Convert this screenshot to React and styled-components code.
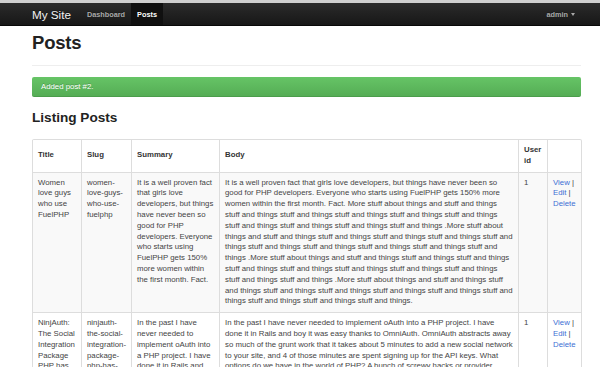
import styled, { createGlobalStyle } from "styled-components";

const GlobalStyle = createGlobalStyle`
  html, body {
    margin: 0;
    padding: 0;
    overflow: hidden;
    background: #fff;
  }
  body {
    font-family: "Liberation Sans", Arial, sans-serif;
    color: #333;
  }
`;

const colors = {
  border: "#dddddd",
  stripe: "#f9f9f9",
  link: "#3d6fd4",
  text: "#444",
};

const TopStrip = styled.div`
  height: 3px;
  background: #cfcfcf;
`;

const NavigationBar = styled.nav`
  height: 22px;
  background: linear-gradient(#2b2b2b, #171717);
  border-bottom: 1px solid #080808;
`;

const NavInner = styled.div`
  width: 549px;
  margin-left: 32px;
  height: 100%;
  display: flex;
  align-items: stretch;
`;

const Brand = styled.a`
  display: flex;
  align-items: center;
  font-size: 11.7px;
  color: #f2f2f2;
  text-decoration: none;
  padding-right: 10px;
  text-shadow: 0 -1px 0 rgba(0, 0, 0, 0.4);
`;

const NavLink = styled.a`
  display: flex;
  align-items: center;
  padding: 0 6px;
  font-size: 7.3px;
  font-weight: bold;
  text-decoration: none;
  color: ${(p) => (p.$active ? "#ffffff" : "#a8a8a8")};
  background: ${(p) => (p.$active ? "#101010" : "transparent")};
  text-shadow: 0 -1px 0 rgba(0, 0, 0, 0.3);
`;

const Spacer = styled.div`
  flex: 1;
`;

const Caret = styled.span`
  display: inline-block;
  margin-left: 3px;
  border-left: 2.5px solid transparent;
  border-right: 2.5px solid transparent;
  border-top: 3px solid #a8a8a8;
`;

const Container = styled.div`
  width: 549px;
  margin-left: 32px;
`;

const PageTitle = styled.h1`
  margin: 6px 0 0;
  font-size: 18.5px;
  line-height: 22px;
  font-weight: bold;
  color: #222;
  letter-spacing: -0.2px;
`;

const Divider = styled.hr`
  margin: 11px 0 11px;
  border: 0;
  border-top: 1px solid #eeeeee;
`;

const Alert = styled.div`
  height: 19px;
  display: flex;
  align-items: center;
  padding: 0 9px;
  background: linear-gradient(#66c466, #55ad55);
  border-bottom: 1px solid #4b9d4b;
  border-radius: 2px;
  font-size: 7.8px;
  color: #fff;
  text-shadow: 0 -1px 0 rgba(0, 0, 0, 0.2);
`;

const SectionTitle = styled.h2`
  margin: 13px 0 13px;
  font-size: 13.6px;
  line-height: 16px;
  font-weight: bold;
  color: #222;
`;

const Table = styled.table`
  width: 549px;
  table-layout: fixed;
  border-collapse: separate;
  border-spacing: 0;
  border: 1px solid ${colors.border};
  border-left: 0;
  border-radius: 2px;
  font-size: 7.8px;
  line-height: 10.8px;
  color: ${colors.text};
`;

const HeadCell = styled.th`
  text-align: left;
  vertical-align: middle;
  padding: 5px 5px;
  font-weight: bold;
  color: #333;
  border-left: 1px solid ${colors.border};
`;

const Row = styled.tr`
  background: ${(p) => (p.$striped ? colors.stripe : "#fff")};
`;

const Cell = styled.td`
  vertical-align: top;
  padding: 5px 5px;
  border-left: 1px solid ${colors.border};
  border-top: 1px solid ${colors.border};
  overflow-wrap: break-word;
`;

const Action = styled.a`
  color: ${colors.link};
  text-decoration: none;
`;

const Sep = styled.span`
  color: ${colors.text};
`;

const more = (n) =>
  "More stuff about things and stuff and things" + " stuff and things".repeat(n);

const posts = [
  {
    title: "Women love guys who use FuelPHP",
    slug: "women-love-guys-who-use-fuelphp",
    summary:
      "It is a well proven fact that girls love developers, but things have never been so good for PHP developers. Everyone who starts using FuelPHP gets 150% more women within the first month. Fact.",
    body: `It is a well proven fact that girls love developers, but things have never been so good for PHP developers. Everyone who starts using FuelPHP gets 150% more women within the first month. Fact. ${more(9)} .${more(9)} .${more(9)} .${more(9)}.`,
    user: 1,
  },
  {
    title: "NinjAuth: The Social Integration Package PHP has been waiting for",
    slug: "ninjauth-the-social-integration-package-php-has-been-waiting-for",
    summary:
      "In the past I have never needed to implement oAuth into a PHP project. I have done it in Rails and boy it was easy thanks to OmniAuth.",
    body: "In the past I have never needed to implement oAuth into a PHP project. I have done it in Rails and boy it was easy thanks to OmniAuth. OmniAuth abstracts away so much of the grunt work that it takes about 5 minutes to add a new social network to your site, and 4 of those minutes are spent signing up for the API keys. What options do we have in the world of PHP? A bunch of screwy hacks or provider specific libraries that all work in different ways.",
    user: 1,
  },
];

const columns = [
  { label: "Title", width: 49 },
  { label: "Slug", width: 50 },
  { label: "Summary", width: 88 },
  { label: "Body", width: 299 },
  { label: "User id", width: 29 },
  { label: "", width: 34 },
];

export default function App() {
  return (
    <>
      <GlobalStyle />
      <TopStrip />
      <NavigationBar>
        <NavInner>
          <Brand href="#">My Site</Brand>
          <NavLink href="#">Dashboard</NavLink>
          <NavLink href="#" $active>
            Posts
          </NavLink>
          <Spacer />
          <NavLink href="#">
            admin
            <Caret />
          </NavLink>
        </NavInner>
      </NavigationBar>
      <Container>
        <PageTitle>Posts</PageTitle>
        <Divider />
        <Alert>Added post #2.</Alert>
        <SectionTitle>Listing Posts</SectionTitle>
        <Table>
          <colgroup>
            {columns.map((c, i) => (
              <col key={i} style={{ width: c.width }} />
            ))}
          </colgroup>
          <thead>
            <tr>
              {columns.map((c, i) => (
                <HeadCell key={i}>{c.label}</HeadCell>
              ))}
            </tr>
          </thead>
          <tbody>
            {posts.map((post, i) => (
              <Row key={i} $striped={i % 2 === 0}>
                <Cell>{post.title}</Cell>
                <Cell>{post.slug}</Cell>
                <Cell>{post.summary}</Cell>
                <Cell>{post.body}</Cell>
                <Cell>{post.user}</Cell>
                <Cell>
                  <Action href="#">View</Action> <Sep>|</Sep>
                  <br />
                  <Action href="#">Edit</Action> <Sep>|</Sep>
                  <br />
                  <Action href="#">Delete</Action>
                </Cell>
              </Row>
            ))}
          </tbody>
        </Table>
      </Container>
    </>
  );
}
